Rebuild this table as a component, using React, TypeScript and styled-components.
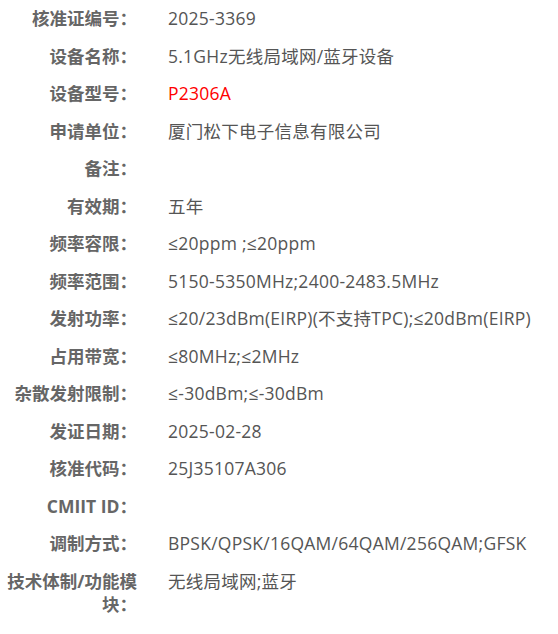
import { FC, Fragment } from 'react'
import styled, { createGlobalStyle } from 'styled-components'

const GlobalStyle = createGlobalStyle`
  body {
    margin: 0;
    background: #ffffff;
    font-family: 'Open Sans', 'Noto Sans CJK SC', sans-serif;
  }
`

const InfoTable = styled.div`
  display: grid;
  grid-template-columns: 130px 1fr;
  column-gap: 31px;
  padding-left: 7px;
  font-size: 17.5px;
  line-height: 23px;
`

const Label = styled.div`
  padding: 7.26px 0;
  text-align: right;
  font-weight: bold;
  color: #666666;
`

const Value = styled.div<{ $highlight?: boolean }>`
  padding: 7.26px 0;
  color: ${(p) => (p.$highlight ? '#ff0000' : '#555555')};
  letter-spacing: 0.25px;
  white-space: nowrap;
`

interface IRow {
  label: string
  value: string
  highlight?: boolean
}

const rows: IRow[] = [
  { label: '核准证编号：', value: '2025-3369' },
  { label: '设备名称：', value: '5.1GHz无线局域网/蓝牙设备' },
  { label: '设备型号：', value: 'P2306A', highlight: true },
  { label: '申请单位：', value: '厦门松下电子信息有限公司' },
  { label: '备注：', value: '' },
  { label: '有效期：', value: '五年' },
  { label: '频率容限：', value: '≤20ppm ;≤20ppm' },
  { label: '频率范围：', value: '5150-5350MHz;2400-2483.5MHz' },
  { label: '发射功率：', value: '≤20/23dBm(EIRP)(不支持TPC);≤20dBm(EIRP)' },
  { label: '占用带宽：', value: '≤80MHz;≤2MHz' },
  { label: '杂散发射限制：', value: '≤-30dBm;≤-30dBm' },
  { label: '发证日期：', value: '2025-02-28' },
  { label: '核准代码：', value: '25J35107A306' },
  { label: 'CMIIT ID：', value: '' },
  { label: '调制方式：', value: 'BPSK/QPSK/16QAM/64QAM/256QAM;GFSK' },
  { label: '技术体制/功能模块：', value: '无线局域网;蓝牙' },
]

const App: FC = () => {
  return (
    <>
      <GlobalStyle />
      <InfoTable>
        {rows.map((row) => (
          <Fragment key={row.label}>
            <Label>{row.label}</Label>
            <Value $highlight={row.highlight}>{row.value}</Value>
          </Fragment>
        ))}
      </InfoTable>
    </>
  )
}

export default App
